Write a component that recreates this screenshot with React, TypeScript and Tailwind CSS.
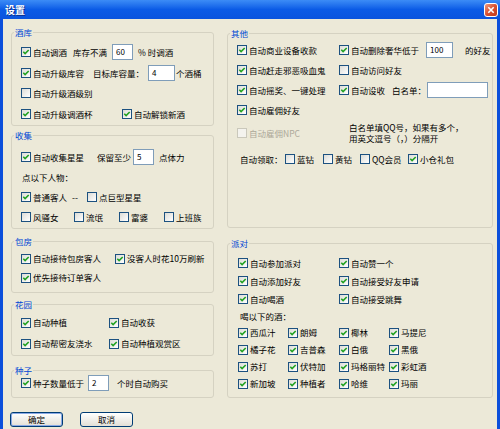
import React from "react";

function Cb({ checked = false, disabled = false }: { checked?: boolean; disabled?: boolean }) {
  return (
    <span
      className={
        "flex h-[10px] w-[10px] shrink-0 items-center justify-center border " +
        (disabled
          ? "border-[#CAC8BB] bg-[#F4F3EE]"
          : "border-[#1C5180] bg-gradient-to-br from-[#DCDCD7] to-white")
      }
    >
      {checked && (
        <svg width="8" height="8" viewBox="0 0 8 8">
          <path d="M1.3 3.8 L3.1 5.6 L6.7 2" stroke="#21A121" strokeWidth="1.6" fill="none" />
        </svg>
      )}
    </span>
  );
}

function Item({
  label,
  checked = false,
  disabled = false,
  className = "",
}: {
  label: React.ReactNode;
  checked?: boolean;
  disabled?: boolean;
  className?: string;
}) {
  return (
    <div className={"flex shrink-0 items-center gap-[2px] whitespace-nowrap " + className}>
      <Cb checked={checked} disabled={disabled} />
      <span className={disabled ? "text-[#ACA899]" : ""}>{label}</span>
    </div>
  );
}

function Field({ value = "", className = "" }: { value?: string; className?: string }) {
  return (
    <div
      className={
        "flex h-[16px] shrink-0 items-center border border-[#7F9DB9] bg-white pl-[3px] text-[8px] " + className
      }
    >
      {value}
    </div>
  );
}

function Group({
  title,
  className = "",
  boxClass,
  children,
}: {
  title: string;
  className?: string;
  boxClass: string;
  children: React.ReactNode;
}) {
  return (
    <div className={"flex flex-col " + className}>
      <div className="relative z-10 -mb-[6px] ml-[3px] h-[12px] w-fit bg-[#ECE9D8] px-[1px] leading-[12px] text-[#0046D5]">
        {title}
      </div>
      <div className={"flex flex-col rounded-[3px] border border-[#D5D2C2] " + boxClass}>{children}</div>
    </div>
  );
}

function Btn({ label, def = false }: { label: string; def?: boolean }) {
  return (
    <div
      className={
        "flex h-[15px] w-[53px] items-center justify-center rounded-[3px] border border-[#003C74] bg-gradient-to-b from-white to-[#E3E0D6] " +
        (def ? "shadow-[inset_0_0_0_1px_#89A9E6]" : "")
      }
    >
      {label}
    </div>
  );
}

export default function App() {
  return (
    <div className="flex h-[429px] w-[500px] flex-col overflow-hidden whitespace-nowrap bg-[#0B4FDB] font-['Noto_Sans_CJK_SC',sans-serif] text-[8.5px] leading-none text-black">
      {/* title bar */}
      <div className="flex h-[19px] shrink-0 items-center justify-between bg-gradient-to-b from-[#3C8CF6] via-[#0B5BE6] to-[#0A54DE] pl-[5px] pr-[2px]">
        <span className="text-[10px] font-bold text-white [text-shadow:1px_1px_0_#0A2E8A]">设置</span>
        <div className="flex h-[14px] w-[14px] items-center justify-center rounded-[3px] border border-white bg-gradient-to-br from-[#EE9A80] via-[#D9502F] to-[#C23A1B]">
          <svg width="8" height="8" viewBox="0 0 8 8">
            <path d="M1.3 1.3 L6.7 6.7 M6.7 1.3 L1.3 6.7" stroke="white" strokeWidth="1.6" />
          </svg>
        </div>
      </div>

      {/* body */}
      <div className="mx-[3px] flex flex-1 flex-col bg-[#ECE9D8] pl-[8px] pt-[7px]">
        <div className="flex gap-[13px]">
          {/* left column */}
          <div className="flex w-[203px] flex-col">
            <Group title="酒库" boxClass="h-[94px] pl-[9px] pt-[9px]">
              <div className="flex h-[20.5px] items-center">
                <Item label="自动调酒" checked className="w-[52px]" />
                <span className="w-[39px]">库存不满</span>
                <Field value="60" className="w-[21px]" />
                <span className="ml-[5px]">% 时调酒</span>
              </div>
              <div className="flex h-[20.5px] items-center">
                <Item label="自动升级库容" checked className="w-[72px]" />
                <span className="w-[55px]">目标库容量：</span>
                <Field value="4" className="w-[27px]" />
                <span className="ml-[1px]">个酒桶</span>
              </div>
              <div className="flex h-[20.5px] items-center">
                <Item label="自动升级酒级别" />
              </div>
              <div className="flex h-[20.5px] items-center">
                <Item label="自动升级调酒杯" checked className="w-[101px]" />
                <Item label="自动解锁新酒" checked />
              </div>
            </Group>

            <Group title="收集" className="mt-[3px]" boxClass="h-[94px] pl-[9px] pt-[11px]">
              <div className="flex h-[20px] items-center">
                <Item label="自动收集星星" checked className="w-[76px]" />
                <span className="w-[36px]">保留至少</span>
                <Field value="5" className="w-[21px]" />
                <span className="ml-[5px]">点体力</span>
              </div>
              <div className="flex h-[20px] items-center pl-[1px]">点以下人物：</div>
              <div className="flex h-[20px] items-center">
                <Item label="普通客人" checked className="w-[51px]" />
                <span className="w-[15px]">--</span>
                <Item label="点巨型星星" />
              </div>
              <div className="flex h-[20px] items-center">
                <Item label="风骚女" className="w-[53px]" />
                <Item label="流氓" className="w-[45px]" />
                <Item label="富婆" className="w-[45px]" />
                <Item label="上班族" />
              </div>
            </Group>

            <Group title="包房" className="mt-[6px]" boxClass="h-[52px] pl-[9px] pt-[7px]">
              <div className="flex h-[19px] items-center">
                <Item label="自动接待包房客人" checked className="w-[94px]" />
                <Item label="没客人时花10万刷新" checked />
              </div>
              <div className="flex h-[19px] items-center">
                <Item label="优先接待订单客人" checked />
              </div>
            </Group>

            <Group title="花园" className="mt-[5px]" boxClass="h-[52px] pl-[9px] pt-[7px]">
              <div className="flex h-[21px] items-center">
                <Item label="自动种植" checked className="w-[88px]" />
                <Item label="自动收获" checked />
              </div>
              <div className="flex h-[21px] items-center">
                <Item label="自动帮密友浇水" checked className="w-[88px]" />
                <Item label="自动种植观赏区" checked />
              </div>
            </Group>

            <Group title="种子" className="mt-[8px]" boxClass="h-[28px] pl-[9px] pt-[2px]">
              <div className="flex h-[20px] items-center">
                <Item label="种子数量低于" checked className="w-[67px]" />
                <Field value="2" className="w-[21px]" />
                <span className="ml-[8px]">个时自动购买</span>
              </div>
            </Group>
          </div>

          {/* right column */}
          <div className="flex w-[266px] flex-col">
            <Group title="其他" className="mt-[1px]" boxClass="h-[195px] pl-[9px] pt-[6px]">
              <div className="flex h-[20px] items-center">
                <Item label="自动商业设备收款" checked className="w-[102px]" />
                <Item label="自动删除奢华低于" checked className="w-[87px]" />
                <Field value="100" className="w-[27px]" />
                <span className="ml-[12px]">的好友</span>
              </div>
              <div className="flex h-[20px] items-center">
                <Item label="自动赶走邪恶吸血鬼" checked className="w-[102px]" />
                <Item label="自动访问好友" />
              </div>
              <div className="flex h-[20px] items-center">
                <Item label="自动摇奖、一键处理" checked className="w-[102px]" />
                <Item label="自动设收" checked className="w-[53px]" />
                <span className="w-[35px] shrink-0">白名单：</span>
                <Field className="w-[61px]" />
              </div>
              <div className="flex h-[20px] items-center">
                <Item label="自动雇佣好友" checked />
              </div>
              <div className="flex h-[26px] items-center">
                <Item label="自动雇佣NPC" disabled className="w-[112px]" />
                <div className="flex flex-col leading-[11px]">
                  <span>白名单填QQ号，如果有多个，</span>
                  <span>用英文逗号（，）分隔开</span>
                </div>
              </div>
              <div className="mt-[3px] flex h-[20px] items-center pl-[3px]">
                <span className="w-[45px]">自动领取：</span>
                <Item label="蓝钻" className="w-[38px]" />
                <Item label="黄钻" className="w-[37px]" />
                <Item label="QQ会员" className="w-[48px]" />
                <Item label="小仓礼包" checked />
              </div>
            </Group>

            <Group title="派对" className="mt-[9px]" boxClass="h-[155px] pl-[10px] pt-[10px]">
              <div className="flex h-[18px] items-center">
                <Item label="自动参加派对" checked className="w-[101px]" />
                <Item label="自动赞一个" checked />
              </div>
              <div className="flex h-[18px] items-center">
                <Item label="自动添加好友" checked className="w-[101px]" />
                <Item label="自动接受好友申请" checked />
              </div>
              <div className="flex h-[18px] items-center">
                <Item label="自动喝酒" checked className="w-[101px]" />
                <Item label="自动接受跳舞" checked />
              </div>
              <div className="flex h-[16px] items-center pl-[2px]">喝以下的酒：</div>
              {[
                ["西瓜汁", "朗姆", "椰林", "马提尼"],
                ["橘子花", "吉普森", "白俄", "黑俄"],
                ["苏打", "伏特加", "玛格丽特", "彩虹酒"],
                ["新加坡", "种植者", "哈维", "玛丽"],
              ].map((row, i) => (
                <div key={i} className="flex h-[17px] items-center">
                  <Item label={row[0]} checked className="w-[50px]" />
                  <Item label={row[1]} checked className="w-[51px]" />
                  <Item label={row[2]} checked className="w-[50px]" />
                  <Item label={row[3]} checked />
                </div>
              ))}
            </Group>
          </div>
        </div>

        {/* buttons */}
        <div className="-ml-[1px] mt-[14px] flex gap-[17px]">
          <Btn label="确定" def />
          <Btn label="取消" />
        </div>
      </div>
    </div>
  );
}
